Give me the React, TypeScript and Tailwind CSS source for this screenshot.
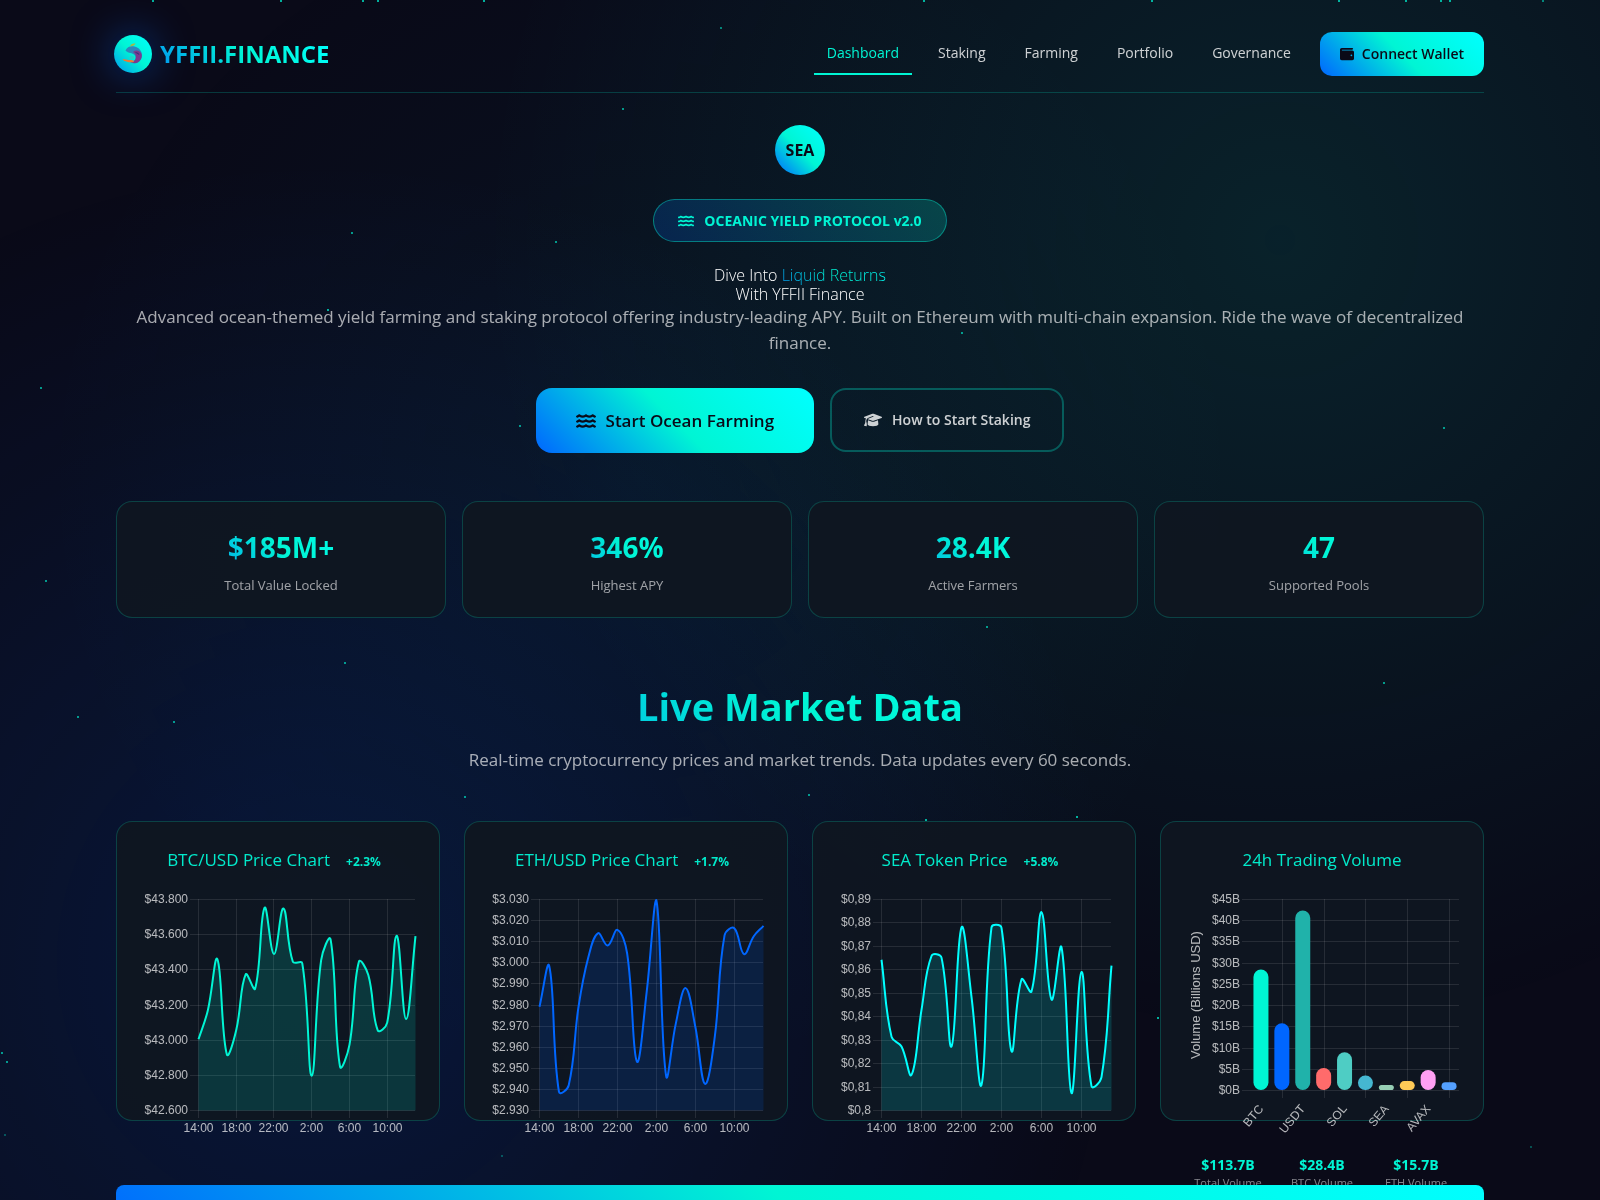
import type { ReactNode } from 'react';
import { FaGraduationCap, FaWallet, FaWater } from 'react-icons/fa6';

/* ---------------- Data ---------------- */
const navLinks = ['Dashboard', 'Staking', 'Farming', 'Portfolio', 'Governance'];

const stats = [
  { value: '$185M+', label: 'Total Value Locked' },
  { value: '346%', label: 'Highest APY' },
  { value: '28.4K', label: 'Active Farmers' },
  { value: '47', label: 'Supported Pools' },
];

const hours = ['14:00', '18:00', '22:00', '2:00', '6:00', '10:00'];

const priceCharts = [
  {
    title: 'BTC/USD Price Chart',
    change: '+2.3%',
    color: '#00f5d4',
    fill: 'rgba(0, 245, 212, 0.15)',
    left: 57,
    min: 42600,
    max: 43800,
    ticks: ['$43.800', '$43.600', '$43.400', '$43.200', '$43.000', '$42.800', '$42.600'],
    data: [
      43005, 43172, 43461, 42920, 43058, 43374, 43293, 43753, 43490, 43749, 43446, 43437,
      42797, 43455, 43573, 42850, 42973, 43446, 43370, 43056, 43100, 43594, 43120, 43592,
    ],
  },
  {
    title: 'ETH/USD Price Chart',
    change: '+1.7%',
    color: '#0066ff',
    fill: 'rgba(0, 102, 255, 0.15)',
    left: 50,
    min: 2930,
    max: 3030,
    ticks: [
      '$3.030', '$3.020', '$3.010', '$3.000', '$2.990', '$2.980',
      '$2.970', '$2.960', '$2.950', '$2.940', '$2.930',
    ],
    data: [
      2979.2, 2998.5, 2938.8, 2942, 2979, 3002.4, 3014, 3008.2, 3015.6, 3004.4, 2953.2, 2986,
      3029.7, 2946.4, 2971.3, 2988, 2969.7, 2942.6, 2965, 3013, 3016.4, 3004.1, 3012.6, 3017.5,
    ],
  },
  {
    title: 'SEA Token Price',
    change: '+5.8%',
    color: '#00ffff',
    fill: 'rgba(0, 255, 255, 0.15)',
    left: 44,
    min: 0.8,
    max: 0.89,
    ticks: ['$0,89', '$0,88', '$0,87', '$0,86', '$0,85', '$0,84', '$0,83', '$0,82', '$0,81', '$0,8'],
    data: [
      0.8643, 0.8315, 0.8273, 0.8152, 0.8429, 0.8659, 0.8652, 0.8273, 0.8781, 0.8485, 0.8109, 0.8781,
      0.8779, 0.8253, 0.8559, 0.8508, 0.8846, 0.8473, 0.8696, 0.8074, 0.8591, 0.8104, 0.8142, 0.8618,
    ],
  },
];

const volumes = [
  { name: 'BTC', value: 28.4, color: '#00f5d4' },
  { name: 'ETH', value: 15.7, color: '#0066ff' },
  { name: 'USDT', value: 42.3, color: '#20b2aa' },
  { name: 'BNB', value: 5.2, color: '#ff6b6b' },
  { name: 'SOL', value: 8.9, color: '#4ecdc4' },
  { name: 'XRP', value: 3.4, color: '#45b7d1' },
  { name: 'SEA', value: 1.2, color: '#96ceb4' },
  { name: 'ADA', value: 2.1, color: '#feca57' },
  { name: 'AVAX', value: 4.7, color: '#ff9ff3' },
  { name: 'DOT', value: 1.8, color: '#54a0ff' },
];

const volumeTotals = [
  { value: '$113.7B', label: 'Total Volume' },
  { value: '$28.4B', label: 'BTC Volume' },
  { value: '$15.7B', label: 'ETH Volume' },
];

// drifting plankton: x, y, opacity
const particles = [
  [152, 0, 0.7], [280, 0, 0.7], [362, 0, 0.7], [377, 0, 0.7], [483, 0, 0.7], [923, 0, 0.7],
  [1151, 0, 0.7], [1338, 0, 0.7], [1405, 0, 0.7], [1440, 0, 0.7], [1449, 0, 0.7], [1542, 0, 0.5],
  [720, 27, 0.5], [622, 108, 0.6], [351, 232, 0.6], [555, 241, 0.6], [327, 309, 0.7],
  [961, 332, 0.6], [40, 387, 0.6], [519, 425, 0.6], [1443, 427, 0.6], [45, 580, 0.6],
  [986, 626, 0.6], [344, 662, 0.6], [1383, 682, 0.6], [77, 716, 0.6], [173, 721, 0.6],
  [464, 796, 0.6], [808, 794, 0.6], [925, 819, 0.7], [1076, 816, 0.7], [1157, 1017, 0.7],
  [1, 1052, 0.6], [6, 1061, 0.6], [4, 1134, 0.3], [501, 1155, 0.3], [1530, 1146, 0.3],
];

/* ---------------- Chart helpers ---------------- */
const TOP = 10;
const RIGHT = 274;
const GRID = 'rgba(255, 255, 255, 0.1)';
const TICK = 'rgba(255, 255, 255, 0.7)';

type Point = { x: number; y: number };

// smooth curve through the points, tension 0.4
const splinePath = (pts: Point[], bottom: number) => {
  const clamp = (y: number) => Math.min(bottom, Math.max(TOP, y));
  const controls = pts.map((p, i) => {
    const prev = pts[Math.max(i - 1, 0)];
    const next = pts[Math.min(i + 1, pts.length - 1)];
    const d01 = Math.hypot(p.x - prev.x, p.y - prev.y);
    const d12 = Math.hypot(next.x - p.x, next.y - p.y);
    const fa = (0.4 * d01) / (d01 + d12);
    const fb = (0.4 * d12) / (d01 + d12);
    const dx = next.x - prev.x;
    const dy = next.y - prev.y;
    return {
      before: { x: p.x - fa * dx, y: clamp(p.y - fa * dy) },
      after: { x: p.x + fb * dx, y: clamp(p.y + fb * dy) },
    };
  });
  return pts
    .map((p, i) => {
      if (i === 0) return `M${p.x},${p.y}`;
      const a = controls[i - 1].after;
      const b = controls[i].before;
      return `C${a.x},${a.y} ${b.x},${b.y} ${p.x},${p.y}`;
    })
    .join(' ');
};

const YAxis = ({ ticks, left, bottom }: { ticks: string[]; left: number; bottom: number }) => (
  <>
    {ticks.map((tick, i) => {
      const y = Math.round(TOP + ((bottom - TOP) * i) / (ticks.length - 1)) + 0.5;
      return (
        <g key={tick}>
          <line x1={left - 8} x2={RIGHT} y1={y} y2={y} stroke={GRID} />
          <text x={left - 10} y={y + 3.5} textAnchor="end" fill={TICK}>
            {tick}
          </text>
        </g>
      );
    })}
  </>
);

const chartClass = "block w-full h-[250px] overflow-visible text-[12px] font-['Liberation_Sans',sans-serif]";

const PriceChart = ({ chart }: { chart: (typeof priceCharts)[number] }) => {
  const bottom = 221;
  const step = (RIGHT - chart.left) / (chart.data.length - 1);
  const pts = chart.data.map((v, i) => ({
    x: chart.left + 0.5 + i * step,
    y: TOP + 0.5 + ((chart.max - v) / (chart.max - chart.min)) * (bottom - TOP),
  }));
  const line = splinePath(pts, bottom);

  return (
    <svg viewBox="0 0 274 250" className={chartClass} role="img" aria-label={chart.title}>
      <YAxis ticks={chart.ticks} left={chart.left} bottom={bottom} />
      {hours.map((hour, i) => {
        const x = Math.round(chart.left + i * 4 * step) + 0.5;
        return (
          <g key={hour}>
            <line x1={x} x2={x} y1={TOP} y2={bottom + 8} stroke={GRID} />
            <text x={x} y="243" textAnchor="middle" fill={TICK}>
              {hour}
            </text>
          </g>
        );
      })}
      <path d={`${line} V${bottom + 0.5} H${chart.left + 0.5} Z`} fill={chart.fill} />
      <path d={line} fill="none" stroke={chart.color} strokeWidth="2" />
    </svg>
  );
};

const VolumeChart = () => {
  const left = 65;
  const bottom = 201;
  const step = (RIGHT - left) / volumes.length;
  const ticks = ['$45B', '$40B', '$35B', '$30B', '$25B', '$20B', '$15B', '$10B', '$5B', '$0B'];

  return (
    <svg viewBox="0 0 274 250" className={chartClass} role="img" aria-label="24h Trading Volume">
      <text x="-106" y="15" transform="rotate(-90)" textAnchor="middle" fill={TICK} fontSize="13">
        Volume (Billions USD)
      </text>
      <YAxis ticks={ticks} left={left} bottom={bottom} />
      {volumes.map((v, i) => {
        const cx = left + 0.5 + step * (i + 0.5);
        const height = (v.value / 45) * (bottom - TOP);
        const x = Math.round(cx) + 0.5;
        return (
          <g key={v.name}>
            {i % 2 === 1 ? (
              <line x1={x} x2={x} y1={TOP} y2={bottom + 8} stroke={GRID} />
            ) : (
              <text
                transform={`translate(${cx + 3} 220) rotate(-50)`}
                textAnchor="end"
                fill={TICK}
              >
                {v.name}
              </text>
            )}
            <rect
              x={cx - 7.5}
              y={bottom - height}
              width="15"
              height={height}
              rx={Math.min(7.5, height / 2)}
              fill={v.color}
            />
          </g>
        );
      })}
    </svg>
  );
};

/* ---------------- Pieces ---------------- */
const LogoMark = () => (
  <span className="-ml-0.5 flex size-[38px] items-center justify-center rounded-full bg-[linear-gradient(45deg,#0066ff_-25%,#00f5d4_50%,#00ffff_100%)] shadow-[0_0_40px_rgba(0,102,255,0.5)]">
    <svg viewBox="0 0 24 24" className="size-6">
      <path d="M4.500 8.500C6 4.500 10 3.500 13.500 4.500c4.500 1 7.500 4.500 7.500 9 0 3-1.500 5.500-4 7-3 1.500-6 1-8-.5 3 0 5-1 5.500-3.500.5-3-2-5-5-5.500-2 0-3.500-1-5-2.500z" fill="#2f86bd" />
      <path d="M12 10c3-2.500 7-1.500 8.500 2 .8 3.500-1 7-4 8.500-2.500 1-5 .5-7-1 3.500 0 5.500-1.500 5.500-4.500 0-2-1-4-3-5z" fill="#7a3b8f" />
      <path d="M14 10.500c2-.5 4 .5 4.500 2.500-1.500-1-3-1.500-4.500-2.500z" fill="#3b2f7a" />
      <path d="M9 4.500c.5-2.500 3-3.500 5.500-3-.5 1.500-2.500 2.500-5.500 3z" fill="#a9b545" />
      <path d="M1.500 17.500c3-1 5.500 1 9 .5 1.500 0 2.500.8 2.500 2-3 .5-5 .5-7-.3-2-.4-3.500-1-4.500-2.200z" fill="#ee7a35" />
      <path d="M8 16c.5-2 3.500-3 5-1.500.8 1.500-.5 3-2.500 3-1 0-2-.5-2.500-1.500z" fill="#22d3c8" />
    </svg>
  </span>
);

const cardClass = 'rounded-2xl border border-[#00f5d4]/20 bg-[#0f1621]/95';
const gradientText =
  'bg-[linear-gradient(45deg,#0066ff_0%,#00f5d4_50%,#00ffff_100%)] bg-clip-text text-transparent';
// lighter start for short inline runs
const gradientTextShort =
  'bg-[linear-gradient(45deg,#0066ff_-25%,#00f5d4_50%,#00ffff_100%)] bg-clip-text text-transparent';

const ChartCard = ({ title, change, children }: { title: string; change?: string; children: ReactNode }) => (
  <article className={`${cardClass} h-[300px] p-6`}>
    <h3 className="mb-4 flex items-baseline justify-center gap-4 text-[17px] leading-[27px] text-[#00f5d4]/95">
      {title}
      {change && <span className="pr-2 text-xs font-bold">{change}</span>}
    </h3>
    {children}
  </article>
);

const App = () => {
  return (
    <div className="relative isolate min-h-screen overflow-hidden bg-[#0a0a18] font-['Open_Sans',sans-serif] text-white">
      {/* Ocean glow */}
      <div className="fixed inset-0 -z-20 bg-[radial-gradient(circle_at_20%_80%,rgba(0,102,255,0.15)_0%,transparent_50%),radial-gradient(circle_at_80%_20%,rgba(0,245,212,0.1)_0%,transparent_50%),radial-gradient(circle_at_40%_40%,rgba(0,170,200,0.06)_0%,transparent_50%)]" />
      <div className="fixed inset-0 -z-10" aria-hidden="true">
        {particles.map(([left, top, opacity]) => (
          <span
            key={`${left}-${top}`}
            className="absolute size-0.5 bg-[#00f5d4]"
            style={{ left, top, opacity }}
          />
        ))}
      </div>

      <div className="mx-auto max-w-[1400px] px-4">
        <header className="flex items-center justify-between border-b border-[#00f5d4]/20 pt-8 pb-4">
          <a href="#" className="flex items-center gap-2 text-2xl leading-8 font-bold">
            <LogoMark />
            <span className={gradientTextShort}>YFFII.FINANCE</span>
          </a>
          <div className="flex items-center gap-4">
            <nav className="flex gap-[13px] text-sm font-medium">
              {navLinks.map((link, i) => (
                <a
                  key={link}
                  href="#"
                  className={
                    i === 0
                      ? 'border-b-2 border-[#00f5d4] px-[13px] py-2.5 text-[#00f5d4]'
                      : 'border-b-2 border-transparent px-[13px] py-2.5 text-white/80'
                  }
                >
                  {link}
                </a>
              ))}
            </nav>
            <button className="flex h-11 items-center gap-2 rounded-xl bg-[linear-gradient(45deg,#0066ff_0%,#00f5d4_50%,#00ffff_100%)] px-5 text-sm font-semibold text-[#0a0a18]">
              <FaWallet />
              Connect Wallet
            </button>
          </div>
        </header>

        {/* Hero */}
        <section className="flex flex-col items-center pt-8 text-center">
          <div className="mb-6 flex size-[50px] items-center justify-center rounded-full bg-[linear-gradient(45deg,#0066ff_0%,#00f5d4_50%,#00ffff_100%)] text-base font-bold text-[#0a0a18]">
            SEA
          </div>
          <div className="mb-6 flex h-[43px] items-center gap-2.5 rounded-full border border-[#00f5d4]/40 bg-[linear-gradient(45deg,rgba(0,102,255,0.2),rgba(0,245,212,0.2))] px-6 text-sm font-bold text-[#00f5d4]">
            <FaWater className="text-base" />
            OCEANIC YIELD PROTOCOL v2.0
          </div>
          <h1 className="text-base leading-[19px] font-light">
            Dive Into <span className={gradientTextShort}>Liquid Returns</span>
            <br />
            With YFFII Finance
          </h1>
          <p className="mb-8 text-[17px] leading-[26px] text-white/65">
            Advanced ocean-themed yield farming and staking protocol offering industry-leading APY. Built on
            Ethereum with multi-chain expansion. Ride the wave of decentralized finance.
          </p>
          <div className="mb-12 flex gap-4">
            <button className="flex h-[65px] items-center gap-2.5 rounded-2xl bg-[linear-gradient(45deg,#0066ff_0%,#00f5d4_50%,#00ffff_100%)] px-10 text-[17px] font-semibold text-[#0a0a18]">
              <FaWater className="text-xl" />
              Start Ocean Farming
            </button>
            <button className="flex h-16 items-center gap-2.5 rounded-2xl border-2 border-[#00f5d4]/30 px-8 text-sm font-semibold text-white/80">
              <FaGraduationCap className="text-lg" />
              How to Start Staking
            </button>
          </div>
        </section>

        <section className="grid grid-cols-4 gap-4">
          {stats.map((stat) => (
            <div key={stat.label} className={`${cardClass} h-[117px] px-6 pt-6 text-center`}>
              <div className={`${gradientText} mb-2 text-[28px] leading-[43px] font-bold`}>{stat.value}</div>
              <div className="text-[13px] leading-4 text-white/60">{stat.label}</div>
            </div>
          ))}
        </section>

        {/* Market data */}
        <section className="mt-16">
          <h2 className={`${gradientText} mb-4 text-center text-[38px] leading-[48px] font-bold`}>
            Live Market Data
          </h2>
          <p className="mb-12 text-center text-[17px] leading-[27px] text-white/65">
            Real-time cryptocurrency prices and market trends. Data updates every 60 seconds.
          </p>
          <div className="grid grid-cols-4 gap-6">
            {priceCharts.map((chart) => (
              <ChartCard key={chart.title} title={chart.title} change={chart.change}>
                <PriceChart chart={chart} />
              </ChartCard>
            ))}
            <ChartCard title="24h Trading Volume">
              <VolumeChart />
              <dl className="mt-4 grid grid-cols-3 gap-2 text-center">
                {volumeTotals.map((total) => (
                  <div key={total.label} className="flex flex-col-reverse">
                    <dt className="text-[11px] leading-4 text-white/50">{total.label}</dt>
                    <dd className="text-sm leading-5 font-bold text-[#00f5d4]">{total.value}</dd>
                  </div>
                ))}
              </dl>
            </ChartCard>
          </div>
        </section>

        <div className="relative mt-16 h-16 rounded-lg bg-[linear-gradient(45deg,#0066ff_0%,#00f5d4_50%,#00ffff_100%)]" />
      </div>
    </div>
  );
};

export default App;
